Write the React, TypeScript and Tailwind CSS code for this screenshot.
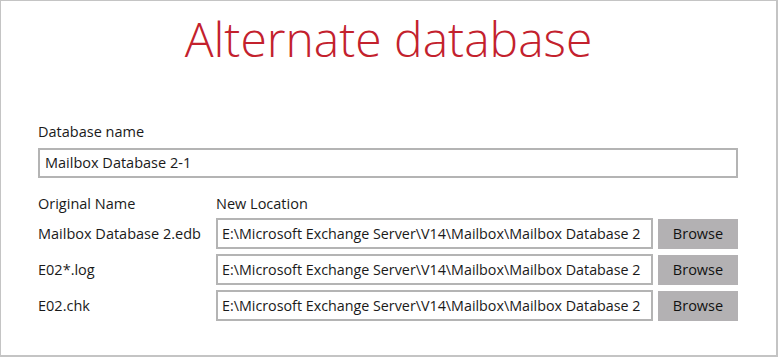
const FILES = [
  { name: "Mailbox Database 2.edb", path: "E:\\Microsoft Exchange Server\\V14\\Mailbox\\Mailbox Database 2" },
  { name: "E02*.log", path: "E:\\Microsoft Exchange Server\\V14\\Mailbox\\Mailbox Database 2" },
  { name: "E02.chk", path: "E:\\Microsoft Exchange Server\\V14\\Mailbox\\Mailbox Database 2" },
];

export default function App() {
  return (
    <div className="w-[778px] h-[357px] bg-white border-l border-t border-r-2 border-b-2 border-[#c4c4c4] font-['Segoe_UI','Open_Sans',sans-serif] text-[14.5px] text-[#1a1a1a]">
      {/* title */}
      <h1 className="mt-[14px] text-center text-[48px] leading-[48px] font-light text-[#c3212d]">
        Alternate database
      </h1>

      <div className="pl-[37px] pr-[38px] mt-[59px]">
        {/* database name */}
        <div className="leading-[20px]">Database name</div>
        <div className="mt-[6px] h-[30px] border-2 border-[#b4b4b4] px-[5px] flex items-center">
          Mailbox Database 2-1
        </div>

        {/* file locations */}
        <div className="mt-[16px] flex leading-[20px]">
          <div className="w-[178px]">Original Name</div>
          <div>New Location</div>
        </div>
        <div className="mt-[4px] flex flex-col gap-[5px]">
          {FILES.map((f) => (
            <div key={f.name} className="flex items-center">
              <div className="w-[178px] whitespace-nowrap">{f.name}</div>
              <div className="w-[437px] h-[31px] border-2 border-[#b4b4b4] px-[4px] flex items-center overflow-hidden whitespace-nowrap text-[14.3px]">
                {f.path}
              </div>
              <button className="ml-[5px] w-[80px] h-[30px] bg-[#b3b1b3] text-[#111]">
                Browse
              </button>
            </div>
          ))}
        </div>
      </div>
    </div>
  );
}
